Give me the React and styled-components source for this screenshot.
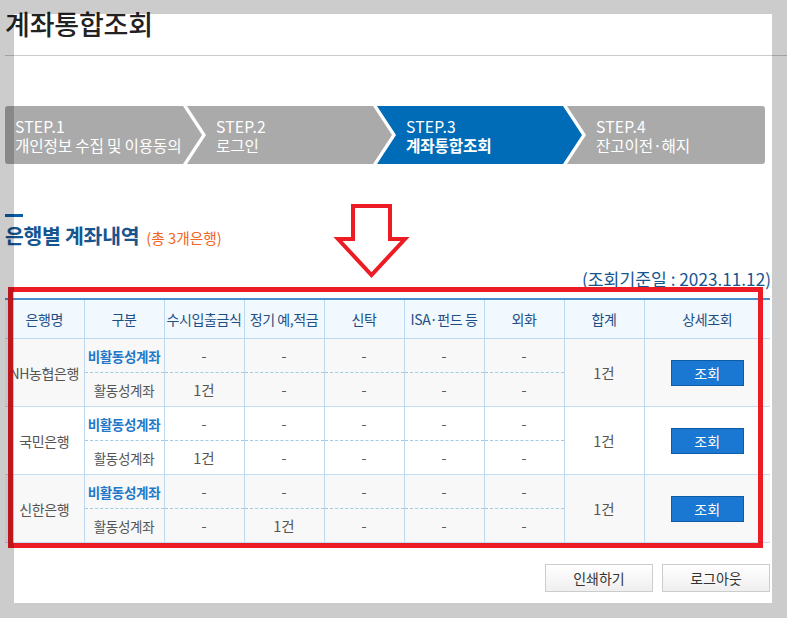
import React from 'react'
import styled, { createGlobalStyle } from 'styled-components'

const GlobalStyle = createGlobalStyle`
  html, body {
    margin: 0;
    padding: 0;
    background: #fff;
  }
  body {
    font-family: "Noto Sans CJK KR", "Noto Sans", sans-serif;
    color: #444;
  }
`

const Page = styled.div`
  position: relative;
  width: 787px;
  height: 618px;
  padding: 0 17px 0 5px;
  box-sizing: border-box;
  overflow: hidden;
`

// grey frame of the window the page sits in, drawn over the content
const Frame = styled.div`
  position: fixed;
  inset: 0;
  border-style: solid;
  border-color: rgba(0, 0, 0, 0.2);
  border-width: 14px 15px 15px 14px;
  pointer-events: none;
  z-index: 10;
`

const Header = styled.div`
  height: 56px;
  box-sizing: border-box;
  padding-top: 9px;
  border-bottom: 1px solid #cccccc;
  margin-right: -17px;
`

const Title = styled.h1`
  margin: 0;
  font-size: 27px;
  line-height: 30px;
  font-weight: 500;
  color: #222;
  letter-spacing: -0.2px;
`

const Steps = styled.ol`
  display: flex;
  list-style: none;
  margin: 50px 0 0 0;
  padding: 0;
  height: 58px;
`

const Step = styled.li`
  display: flex;
  flex-direction: column;
  justify-content: center;
  box-sizing: border-box;
  height: 58px;
  width: ${(p) => (p.first ? '197px' : p.last ? '198px' : '205px')};
  margin-left: ${(p) => (p.first ? '0' : '-15px')};
  padding-left: ${(p) => (p.first ? '10px' : '29px')};
  padding-top: 1px;
  background: ${(p) => (p.active ? '#006cb8' : '#aaaaaa')};
  border-radius: ${(p) => (p.first ? '3px 0 0 3px' : p.last ? '0 3px 3px 0' : '0')};
  color: #fff;
  font-size: 15.7px;
  line-height: 19px;
  white-space: nowrap;
  clip-path: ${(p) =>
    p.first
      ? 'polygon(0 0, calc(100% - 19px) 0, 100% 50%, calc(100% - 19px) 100%, 0 100%)'
      : p.last
      ? 'polygon(0 0, 100% 0, 100% 100%, 0 100%, 19px 50%)'
      : 'polygon(0 0, calc(100% - 19px) 0, 100% 50%, calc(100% - 19px) 100%, 0 100%, 19px 50%)'};
`

const StepNo = styled.span`
  letter-spacing: 0.2px;
`

const StepName = styled.span`
  font-weight: ${(p) => (p.active ? 700 : 400)};
  letter-spacing: -0.2px;
`

const SectionBar = styled.div`
  width: 18px;
  height: 3px;
  margin-top: 50px;
  background: #0b5ea8;
`

const SectionHead = styled.div`
  display: flex;
  align-items: baseline;
  gap: 7px;
  margin-top: 6px;
`

const SectionTitle = styled.h2`
  margin: 0;
  font-size: 20.5px;
  line-height: 24px;
  font-weight: 700;
  color: #175590;
  letter-spacing: -0.3px;
`

const Count = styled.span`
  font-size: 14.7px;
  color: #f26522;
`

const DateLine = styled.div`
  margin: 20px -1px 0 0;
  text-align: right;
  font-size: 17.2px;
  line-height: 21px;
  color: #175590;
`

const TableWrap = styled.div`
  position: relative;
  margin-top: 9px;
`

const Table = styled.table`
  width: 765px;
  border-collapse: collapse;
  table-layout: fixed;
  border-top: 2px solid #4a8fca;
  border-bottom: 1px solid #5b9bd5;
`

const Th = styled.th`
  height: 38px;
  padding: 0;
  background: #f1f8fe;
  font-size: 14px;
  font-weight: 400;
  color: #1d4f85;
  white-space: nowrap;
  overflow: hidden;
  border-bottom: 1px solid #bcd9f1;
  border-right: ${(p) => (p.last ? 'none' : '1px solid #bcd9f1')};
  letter-spacing: -0.4px;
`

const Tr = styled.tr`
  background: ${(p) => (p.shaded ? '#f8f8f8' : '#ffffff')};
`

const Td = styled.td`
  height: 33px;
  padding: 0;
  text-align: center;
  font-size: 14px;
  color: #555;
  white-space: nowrap;
  border-right: ${(p) => (p.last ? 'none' : '1px solid #bcd9f1')};
  border-bottom: ${(p) => (p.dashed ? '1px dashed #9fcbe9' : '1px solid #c3ddf1')};
`

const BankName = styled(Td)`
  font-size: 14px;
  letter-spacing: -0.4px;
`

const Kind = styled.span`
  font-size: 13.5px;
  color: ${(p) => (p.inactive ? '#1f78c8' : '#555')};
  font-weight: ${(p) => (p.inactive ? 700 : 400)};
  letter-spacing: -0.3px;
`

const Amount = styled.span`
  font-size: 14.5px;
`

const ViewButton = styled.button`
  width: 73px;
  height: 26px;
  border: 1px solid #0e5ba8;
  background: #1a77d2;
  color: #fff;
  font-family: inherit;
  font-size: 14px;
  padding: 0;
  cursor: pointer;
`

const RedBox = styled.div`
  position: absolute;
  left: 3px;
  top: -11px;
  width: 755px;
  height: 261px;
  box-sizing: border-box;
  border: 5px solid #ed1c24;
  pointer-events: none;
`

const Arrow = styled.svg`
  position: absolute;
  left: 333px;
  top: 202px;
`

const Actions = styled.div`
  display: flex;
  justify-content: flex-end;
  gap: 9px;
  margin-top: 21px;
`

const ActionButton = styled.button`
  width: 108px;
  height: 28px;
  border: 1px solid #cccccc;
  background: linear-gradient(#ffffff, #efefef);
  color: #333;
  font-family: inherit;
  font-size: 14px;
  padding: 0;
  cursor: pointer;
`

const steps = [
  { no: 'STEP.1', name: '개인정보 수집 및 이용동의' },
  { no: 'STEP.2', name: '로그인' },
  { no: 'STEP.3', name: '계좌통합조회', active: true },
  { no: 'STEP.4', name: '잔고이전·해지' },
]

const columns = ['은행명', '구분', '수시입출금식', '정기 예,적금', '신탁', 'ISA·펀드 등', '외화', '합계', '상세조회']

const banks = [
  { name: 'NH농협은행', inactive: ['-', '-', '-', '-', '-'], active: ['1건', '-', '-', '-', '-'], total: '1건' },
  { name: '국민은행', inactive: ['-', '-', '-', '-', '-'], active: ['1건', '-', '-', '-', '-'], total: '1건' },
  { name: '신한은행', inactive: ['-', '-', '-', '-', '-'], active: ['-', '1건', '-', '-', '-'], total: '1건' },
]

const widths = [79, 80, 80, 80, 80, 80, 80, 80, 126]

export default function App() {
  return (
    <Page>
      <GlobalStyle />
      <Header>
        <Title>계좌통합조회</Title>
      </Header>

      <Steps>
        {steps.map((s, i) => (
          <Step key={s.no} first={i === 0} last={i === steps.length - 1} active={s.active}>
            <StepNo>{s.no}</StepNo>
            <StepName active={s.active}>{s.name}</StepName>
          </Step>
        ))}
      </Steps>

      <SectionBar />
      <SectionHead>
        <SectionTitle>은행별 계좌내역</SectionTitle>
        <Count>(총 3개은행)</Count>
      </SectionHead>

      <DateLine>(조회기준일 : 2023.11.12)</DateLine>

      <TableWrap>
        <Table>
          <colgroup>
            {widths.map((w, i) => (
              <col key={i} style={{ width: w }} />
            ))}
          </colgroup>
          <thead>
            <tr>
              {columns.map((c, i) => (
                <Th key={c} last={i === columns.length - 1}>
                  {c}
                </Th>
              ))}
            </tr>
          </thead>
          <tbody>
            {banks.map((b, bi) => (
              <React.Fragment key={b.name}>
                <Tr shaded={bi !== 1}>
                  <BankName rowSpan={2}>{b.name}</BankName>
                  <Td dashed>
                    <Kind inactive>비활동성계좌</Kind>
                  </Td>
                  {b.inactive.map((v, i) => (
                    <Td key={i} dashed>
                      <Amount>{v}</Amount>
                    </Td>
                  ))}
                  <Td rowSpan={2}>
                    <Amount>{b.total}</Amount>
                  </Td>
                  <Td rowSpan={2} last>
                    <ViewButton>조회</ViewButton>
                  </Td>
                </Tr>
                <Tr shaded={bi !== 1}>
                  <Td>
                    <Kind>활동성계좌</Kind>
                  </Td>
                  {b.active.map((v, i) => (
                    <Td key={i}>
                      <Amount>{v}</Amount>
                    </Td>
                  ))}
                </Tr>
              </React.Fragment>
            ))}
          </tbody>
        </Table>
        <RedBox />
      </TableWrap>

      <Actions>
        <ActionButton>인쇄하기</ActionButton>
        <ActionButton>로그아웃</ActionButton>
      </Actions>

      <Arrow width="78" height="78" viewBox="0 0 78 78">
        <path
          d="M20 4 H57 V37 H72 L38.5 73 L5 37 H20 Z"
          fill="#fff"
          stroke="#ed1c24"
          strokeWidth="4"
          strokeLinejoin="miter"
        />
      </Arrow>
      <Frame />
    </Page>
  )
}
